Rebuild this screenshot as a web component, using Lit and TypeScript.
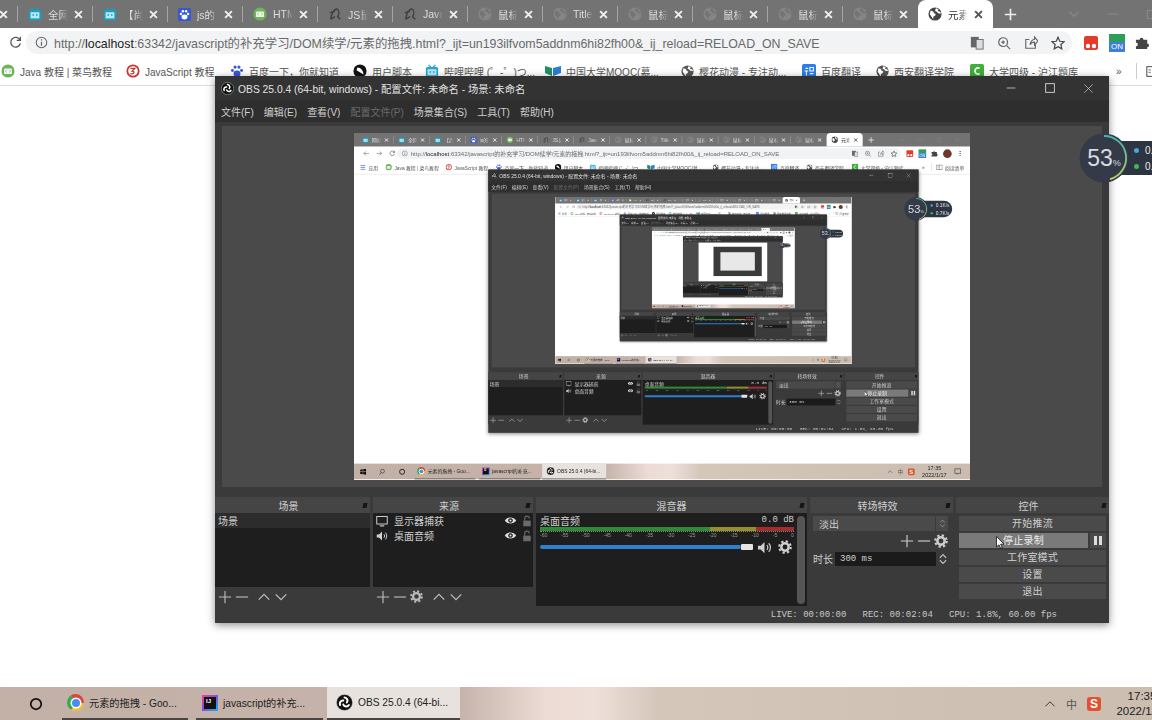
import { LitElement, css, html, svg } from 'lit'
import { customElement, property } from 'lit/decorators.js'

const sans = css`"Liberation Sans", "Noto Sans CJK SC", sans-serif`

// ---- icons ----
const ico = (size: number, body: unknown, box = 16) =>
  html`<svg width=${size} height=${size} viewBox="0 0 ${box} ${box}" style="flex:none;display:block">${body}</svg>`

const globe = (c: string, hole: string, size = 14) => ico(size, svg`
  <circle cx="8" cy="8" r="7.5" fill=${c}/>
  <path d="M3 4l3 1 1 2 2 1-1 2-2 1v3l-2-3-2-3zM9 1.5l3 1-1 2 3 1 1 2-3 0-2-2-2-1z" fill=${hole}/>`)

const obsLogo = (size: number) => ico(size, svg`
  <circle cx="8" cy="8" r="7.6" fill="#111" stroke="#ddd" stroke-width=".5"/>
  <g fill="none" stroke="#fff" stroke-width="1.9" stroke-linecap="round">
    <path d="M8 3.2a3 3 0 0 1 2.2 4.8"/>
    <path d="M8 3.2a3 3 0 0 1 2.2 4.8" transform="rotate(120 8 8)"/>
    <path d="M8 3.2a3 3 0 0 1 2.2 4.8" transform="rotate(240 8 8)"/>
  </g>`)

const paw = (size = 14) => ico(size, svg`
  <rect width="16" height="16" rx="2" fill="#3558d6"/>
  <g fill="#fff"><ellipse cx="8" cy="11" rx="3.6" ry="3"/><circle cx="3.6" cy="7.4" r="1.5"/><circle cx="12.4" cy="7.4" r="1.5"/><circle cx="6" cy="4" r="1.5"/><circle cx="10" cy="4" r="1.5"/></g>`)

const tv = (size = 14, c = '#1e9fc6') => ico(size, svg`
  <path d="M4 1l3 3M12 1L9 4" stroke=${c} stroke-width="1.4"/>
  <rect x="1" y="3.5" width="14" height="11.5" rx="2" fill=${c}/>
  <rect x="3" y="6" width="10" height="7" fill="#bfe6f2"/>
  <circle cx="6" cy="9" r="1" fill=${c}/><circle cx="10" cy="9" r="1" fill=${c}/>`)

const runoob = (size = 14) => ico(size, svg`
  <circle cx="8" cy="8" r="7.5" fill="#6fb35b"/>
  <rect x="3.5" y="5" width="9" height="6.5" rx="1" fill="#f1f6ee"/>
  <path d="M5 8l1.5-1.4M5 8l1.5 1.4M11 8L9.5 6.6M11 8L9.5 9.400" stroke="#6fb35b" stroke-width=".8"/>`)

const spider = (size = 14, c = '#3f3f3f') => ico(size, svg`
  <path d="M3 14C4 8 6 3 10 2c3 2 3 6 1 9l3 3M3 14l5-3M8 5c-2 0-5 1-6 2" fill="none" stroke=${c} stroke-width="1.6"/>`)

const gear = (size: number, c = '#cfcfcf') => ico(size, svg`
  <circle cx="8" cy="8" r="4.2" fill="none" stroke=${c} stroke-width="2.8"/>
  <circle cx="8" cy="8" r="6.6" fill="none" stroke=${c} stroke-width="2.4" stroke-dasharray="2.6 2.58"/>`)

const plus = (size = 14, c = '#bbb') => ico(size, svg`<path d="M8 1v14M1 8h14" stroke=${c} stroke-width="1.3"/>`)
const minus = (size = 14, c = '#bbb') => ico(size, svg`<path d="M1 8h14" stroke=${c} stroke-width="1.3"/>`)
const up = (size = 14, c = '#bbb') => ico(size, svg`<path d="M2 11l6-6 6 6" fill="none" stroke=${c} stroke-width="1.5"/>`)
const down = (size = 14, c = '#bbb') => ico(size, svg`<path d="M2 5l6 6 6-6" fill="none" stroke=${c} stroke-width="1.5"/>`)
const close = (size = 9, c = '#eee', w = 1.8) => ico(size, svg`<path d="M2 2l12 12M14 2L2 14" stroke=${c} stroke-width=${w * 2}/>`)
const speaker = (size: number, c = '#cfcfcf') => ico(size, svg`
  <path d="M1 6h3l4-4v12l-4-4H1z" fill=${c}/>
  <path d="M10.500 5.500a3.500 3.500 0 0 1 0 5M12.500 3.500a6.500 6.500 0 0 1 0 9" fill="none" stroke=${c} stroke-width="1.300"/>`)
const eye = () => ico(13, svg`
  <path d="M1 8c3-5 11-5 14 0-3 5-11 5-14 0z" fill="#dedede"/>
  <circle cx="8" cy="8" r="2.800" fill="#1e1e1e"/><circle cx="8" cy="8" r="1.300" fill="#dedede"/>`)
const lock = () => ico(12, svg`
  <rect x="3" y="7.500" width="10" height="7.500" fill="#6a6a6a"/>
  <path d="M5 7.500V4.500a3 3 0 0 1 6 0" fill="none" stroke="#6a6a6a" stroke-width="1.500"/>`)
const monitor = () => ico(12, svg`
  <rect x="1" y="2" width="14" height="10" fill="none" stroke="#d0d0d0" stroke-width="1.300"/>
  <path d="M5 14.500h6" stroke="#d0d0d0" stroke-width="1.500"/>`)

const tabIcons: Record<string, () => unknown> = {
  tv: () => tv(14, '#17a0c4'),
  paw: () => paw(13),
  run: () => runoob(14),
  spider: () => spider(14),
  globe: () => globe('#858585', '#747474'),
}

const tabs = [
  ['tv', '网站'], ['tv', '全网'], ['tv', '【尚'], ['paw', 'js的'], ['run', 'HTM'], ['spider', 'JS鼠'], ['spider', 'Java'],
  ['globe', '鼠标'], ['globe', 'Title'], ['globe', '鼠标'], ['globe', '鼠标'], ['globe', '鼠标'], ['globe', '鼠标'],
]

const marks = [
  { w: 125, t: 'Java 教程 | 菜鸟教程', i: () => runoob(14) },
  { w: 104, t: 'JavaScript 教程', i: () => ico(14, svg`<circle cx="8" cy="8" r="6.500" fill="none" stroke="#c7352c" stroke-width="2"/><path d="M5 5h5L7 8c3 0 3 4-2 3" fill="none" stroke="#c7352c" stroke-width="1.500"/>`) },
  { w: 123, t: '百度一下，你就知道', i: () => ico(14, svg`<g fill="#3558d6"><ellipse cx="8" cy="11" rx="4" ry="3.500"/><circle cx="2.800" cy="7.500" r="1.700"/><circle cx="13.200" cy="7.500" r="1.700"/><circle cx="5.800" cy="3.500" r="1.800"/><circle cx="10.200" cy="3.500" r="1.800"/></g>`) },
  { w: 72, t: '用户脚本', i: () => ico(14, svg`<circle cx="8" cy="8" r="7.500" fill="#111"/><path d="M5 4c4 0 7 4 7 8L4 7z" fill="#fff"/>`) },
  { w: 120, t: '哔哩哔哩 (゜-゜)つ...', i: () => tv(14, '#22a6d8') },
  { w: 136, t: '中国大学MOOC(慕...', i: () => ico(16, svg`<path d="M0 3l7 2v8l-7-3z" fill="#1f8f6a"/><path d="M8 5l8-2v7l-8 3z" fill="#2a7fd0"/>`) },
  { w: 121, t: '樱花动漫 - 专注动...', i: () => globe('#555', '#fff', 13) },
  { w: 74, t: '百度翻译', i: () => ico(14, svg`<rect width="16" height="16" rx="2" fill="#2b7de9"/><path d="M4 5h3M3 8h4M5 8v5M9 4h4v4H9zM9 11h4" stroke="#fff" stroke-width="1.200" fill="none"/>`) },
  { w: 94, t: '西安翻译学院', i: () => globe('#555', '#fff', 13) },
  { w: 146, t: '大学四级 - 沪江题库', i: () => ico(14, svg`<rect width="16" height="16" rx="2" fill="#3fae3a"/><path d="M11 5a3.500 3.500 0 1 0 0 6" fill="none" stroke="#fff" stroke-width="1.800"/>`) },
]

// ---- browser window ----
@customElement('chrome-window')
export class ChromeWindow extends LitElement {
  static styles = css`
    :host { display: flex; flex-direction: column; flex: 1; background: #fff; font-family: ${sans}; min-height: 0; }
    .strip { height: 28px; background: #737373; display: flex; padding-left: 7px; flex: none; }
    .tab { width: 75px; flex: none; display: flex; align-items: center; box-sizing: border-box; padding: 0 10px 0 10px; gap: 6px; color: #ddd; font-size: 10.500px; position: relative; }
    .tab::after { content: ""; position: absolute; right: 0; top: 6px; height: 16px; width: 1px; background: #a5a5a5; }
    .tab.last::after { display: none; }
    .tab .name { flex: 1; overflow: hidden; white-space: nowrap; -webkit-mask-image: linear-gradient(90deg, #000 60%, transparent); mask-image: linear-gradient(90deg, #000 60%, transparent); }
    .tab.active { background: #fff; border-radius: 8px 8px 0 0; color: #333; }
    .tab.active::after { display: none; }
    .new { margin-left: 11px; display: flex; align-items: center; }
    .winbtns { margin-left: auto; display: flex; align-items: center; padding-right: 21px; gap: 27px; }
    .tools { height: 29px; flex: none; display: flex; align-items: center; padding-left: 12px; }
    .nav { width: 27px; display: flex; justify-content: center; flex: none; }
    .pill { margin-left: -3px; width: 1046px; height: 23px; border-radius: 12px; background: #f1f3f4; display: flex; align-items: center; flex: none; box-sizing: border-box; padding: 0 7px 0 9px; }
    .url { margin-left: 6px; font-size: 12.400px; color: #6a6a6a; white-space: nowrap; }
    .url b { font-weight: 400; color: #222; }
    .pill-right { margin-left: auto; display: flex; gap: 13px; align-items: center; }
    .exts { display: flex; align-items: center; margin-left: 11px; gap: 10px; }
    .on { width: 16px; height: 18px; display: flex; flex-direction: column; font-size: 8px; line-height: 9px; text-align: center; color: #fff; }
    .on i { height: 8px; background: #2f9e58; display: block; }
    .on span { background: #3d7fd9; height: 10px; }
    .avatar { width: 18px; height: 18px; border-radius: 50%; background: #6b3a2a; }
    .dots { width: 3px; height: 13px; margin-left: 6px; background: radial-gradient(circle, #555 1.300px, transparent 1.500px) 0 0/3px 4.500px; }
    .marks { height: 28px; flex: none; display: flex; align-items: center; padding-left: 12px; border-bottom: 1px solid #dcdcdc; font-size: 10px; color: #555; white-space: nowrap; }
    .mark { display: flex; align-items: center; gap: 5px; flex: none; overflow: hidden; }
    .apps { width: 53px; }
    .more { margin-left: 0; width: 20px; flex: none; color: #555; }
    .vsep { width: 1px; height: 16px; background: #ccc; flex: none; }
    .read { margin-left: 9px; display: flex; align-items: center; gap: 5px; }
  `

  render() {
    return html`
      <div class="strip">
        ${tabs.map(([k, t], n) => html`
          <div class="tab ${n === tabs.length - 1 ? 'last' : ''}">${tabIcons[k]()}<span class="name">${t}</span>${close(9)}</div>`)}
        <div class="tab active">${globe('#444', '#fff')}<span class="name">元素</span>${close(9, '#555')}</div>
        <div class="new">${ico(13, svg`<path d="M8 1v14M1 8h14" stroke="#eee" stroke-width="2"/>`)}</div>
        <div class="winbtns">
          ${down(12, '#8a8a8a')}${minus(12, '#8a8a8a')}
          ${ico(11, svg`<rect x="2" y="2" width="12" height="12" fill="none" stroke="#8a8a8a" stroke-width="1.500"/>`)}
          ${close(11, '#8a8a8a', .6)}
        </div>
      </div>
      <div class="tools">
        <div class="nav">${ico(13, svg`<path d="M15 8H2M7 3L2 8l5 5" fill="none" stroke="#777" stroke-width="1.600"/>`)}</div>
        <div class="nav">${ico(13, svg`<path d="M1 8h13M9 3l5 5-5 5" fill="none" stroke="#777" stroke-width="1.600"/>`)}</div>
        <div class="nav">${ico(13, svg`<path d="M13.500 5A6 6 0 1 0 14 9M14 1v4.500H9.500" fill="none" stroke="#555" stroke-width="1.600"/>`)}</div>
        <div class="pill">
          ${ico(13, svg`<circle cx="8" cy="8" r="6.500" fill="none" stroke="#666" stroke-width="1.300"/><path d="M8 7v5M8 4v1.500" stroke="#666" stroke-width="1.500"/>`)}
          <span class="url">http://<b>localhost</b>:63342/javascript的补充学习/DOM续学/元素的拖拽.html?_ijt=un193ilfvom5addnm6hi82fh00&_ij_reload=RELOAD_ON_SAVE</span>
          <div class="pill-right">
            ${ico(14, svg`<rect x="1" y="1" width="9" height="12" fill="#666"/><rect x="7" y="4" width="8" height="11" fill="#ddd" stroke="#666"/>`)}
            ${ico(14, svg`<circle cx="7" cy="7" r="5" fill="none" stroke="#666" stroke-width="1.400"/><path d="M11 11l4 4M5 7h4M7 5v4" stroke="#666" stroke-width="1.400"/>`)}
            ${ico(14, svg`<path d="M13 9v5H2V4h4M7 10c0-4 3-6 5-6V1l4 5-4 4V7c-2 0-4 1-5 3z" fill="none" stroke="#666" stroke-width="1.300"/>`)}
            ${ico(14, svg`<path d="M8 1.500l2 4.500 5 .5-3.700 3.300 1 4.900L8 12.300 3.700 14.700l1-4.900L1 6.500 6 6z" fill="none" stroke="#444" stroke-width="1.400"/>`)}
          </div>
        </div>
        <div class="exts">
          ${ico(16, svg`<rect x="1" y="1" width="14" height="14" rx="2" fill="#e33a2c"/><circle cx="5" cy="11" r="2.200" fill="#fff"/><circle cx="11" cy="11" r="2.200" fill="#fff"/>`)}
          <div class="on"><i></i><span>ON</span></div>
          ${ico(15, svg`<path d="M1 5h4a2 2 0 1 1 4 0h4v4a2 2 0 1 1 0 4v2H1v-3a2 2 0 1 0 0-4z" fill="#444"/>`)}
          <div class="avatar"></div>
          <div class="dots"></div>
        </div>
      </div>
      <div class="marks">
        <div class="mark apps">${ico(13, svg`<path d="M2 3h12M2 8h12M2 13h12" stroke="#4a7fd0" stroke-width="2"/>`)}应用</div>
        ${marks.map(m => html`<div class="mark" style="width:${m.w}px">${m.i()}<span>${m.t}</span></div>`)}
        <div class="more">»</div>
        <div class="vsep"></div>
        <div class="read">${ico(13, svg`<rect x="1" y="2" width="14" height="12" fill="none" stroke="#555" stroke-width="1.300"/><path d="M8 2v12M3 6h3M3 9h3" stroke="#555"/>`)}阅读清单</div>
      </div>
    `
  }
}

// ---- taskbar ----
@customElement('task-bar')
export class TaskBar extends LitElement {
  static styles = css`
    :host { display: flex; flex: none; height: 33px; align-items: center; font-family: ${sans}; font-size: 10.200px; color: #222;
      background: linear-gradient(90deg, #c2b0a6 0, #c6b4ab 524px, #ecdcd5 610px, #efdfd9 660px, #d4c7ba 720px, #cabdb0 1280px); }
    .sys { flex: none; display: flex; justify-content: center; }
    .btn { height: 33px; box-sizing: border-box; border-bottom: 2px solid #4a4541; display: flex; align-items: center; gap: 5px; padding-left: 6px; flex: none; white-space: nowrap; overflow: hidden; }
    .btn.cur { background: #e8e2de; }
    .chrome { width: 17px; height: 17px; border-radius: 50%; flex: none; position: relative;
      background: conic-gradient(from -30deg, #de4437 0 120deg, #f6c02c 120deg 240deg, #3aa757 240deg 360deg); }
    .chrome::after { content: ""; position: absolute; inset: 4.500px; border-radius: 50%; background: #4a8cf0; box-shadow: 0 0 0 1.500px #fff; }
    .ij { width: 16px; height: 16px; flex: none; background: linear-gradient(135deg, #fc3a8b, #7b53e0 50%, #12b7f0); padding: 2px; box-sizing: border-box; }
    .ij div { width: 12px; height: 12px; background: #111; color: #fff; font-size: 6px; line-height: 8px; text-indent: 2px; font-weight: 700; }
    .right { margin-left: auto; display: flex; align-items: center; }
    .clock { width: 70px; flex: none; text-align: center; line-height: 15px; font-size: 11.500px; }
    .cn { font-size: 11px; color: #555; }
    .sogou { width: 14px; height: 14px; border-radius: 3px; background: #e2502d; color: #fff; font-size: 12px; font-weight: 700; line-height: 14px; text-align: center; }
  `

  render() {
    return html`
      <div class="sys" style="width:38px">${ico(14, svg`<path d="M1 3l6-1v5.500H1zM8 2l7-1v6.500H8zM1 8.500h6V14l-6-1zM8 8.500h7V15l-7-1z" fill="#111"/>`)}</div>
      <div class="sys" style="width:40px">${ico(14, svg`<circle cx="9.500" cy="6.500" r="4.500" fill="none" stroke="#222" stroke-width="1.300"/><path d="M6.500 10L2 15" stroke="#222" stroke-width="1.300"/>`)}</div>
      <div class="sys" style="width:44px">${ico(14, svg`<circle cx="8" cy="8" r="6" fill="none" stroke="#111" stroke-width="2"/>`)}</div>
      <div class="btn" style="width:126px;margin-left:4px;padding-left:5px"><div class="chrome"></div>元素的拖拽 - Goo...</div>
      <div class="btn" style="width:127px;margin-left:8px;padding-left:6px"><div class="ij"><div>IJ</div></div>javascript的补充...</div>
      <div class="btn cur" style="width:133px;margin-left:4px;padding-left:9px">${obsLogo(17)}OBS 25.0.4 (64-bi...</div>
      <div class="right">
        ${ico(12, svg`<path d="M2 11l6-6 6 6" fill="none" stroke="#333" stroke-width="1.300"/>`)}
        <span class="cn" style="margin-left:10px">中</span>
        <div class="sogou" style="margin-left:10px">S</div>
        <div class="clock" style="margin-left:6px"><div>17:35</div><div>2022/1/17</div></div>
        <div style="margin:0 18px 0 6px">${ico(15, svg`<path d="M1.500 2h13v10H9l-2 2v-2H1.500z" fill="none" stroke="#222" stroke-width="1.200"/>`)}</div>
      </div>
    `
  }
}

// ---- OBS ----
const meterLabels = ['-60', '-55', '-50', '-45', '-40', '-35', '-30', '-25', '-20', '-15', '-10', '-5', '0']

@customElement('obs-window')
export class ObsWindow extends LitElement {
  @property({ type: Number }) depth = 0

  static styles = css`
    :host { display: flex; flex-direction: column; position: absolute; left: 279px; top: 76px; width: 894px; height: 547px;
      background: #3a3a3a; color: #cfcfcf; font-family: ${sans}; font-size: 10px; box-shadow: 0 2px 8px rgba(0,0,0,.45); }
    .title { height: 24px; flex: none; background: #333; display: flex; align-items: center; padding-left: 6px; gap: 4px; font-size: 10.300px; color: #e2e2e2; white-space: nowrap; }
    .ctl { margin-left: auto; display: flex; align-items: center; }
    .ctl div { width: 39px; display: flex; justify-content: center; }
    .menu { height: 22px; flex: none; background: #2e2e2e; display: flex; align-items: center; padding-left: 6px; gap: 10px; white-space: nowrap; font-size: 10px; }
    .menu .off { color: #6b6b6b; }
    .preview { margin: 4px 7px 10px; height: 361px; flex: none; background: #4a4a4a; display: flex; align-items: center; justify-content: center; }
    .frame { width: 616px; height: 346.500px; overflow: hidden; flex: none; background: #fff; filter: blur(.35px); }
    .frame desk-screen { transform: scale(.48125); transform-origin: 0 0; }
    .stub { margin: 5.900% 8% 0 21.800%; height: 76%; background: #3a3a3a; padding: 8% 10%; box-sizing: border-box; }
    .stub div { height: 100%; background: #e8e8e8; }
    .docks { display: flex; gap: 3px; height: 109px; flex: none; }
    .dock { display: flex; flex-direction: column; flex: none; }
    .head { height: 16px; flex: none; box-sizing: border-box; padding-right: 8px; background: #454545; display: flex; align-items: center; justify-content: center; position: relative; }
    .head.mid { padding-right: 0; }
    .head::after { content: ""; position: absolute; right: 3px; top: 6px; width: 4px; height: 5px; background: #151515; transform: skewX(-12deg); }
    .list { flex: 1; background: #1e1e1e; min-height: 0; }
    .bar { height: 19px; flex: none; display: flex; align-items: center; padding-left: 3px; gap: 3px; background: #3a3a3a; }
    .row { height: 15px; display: flex; align-items: center; padding-left: 3px; }
    .row.sel { background: #2c2c2c; }
    .src { gap: 6px; padding: 0 0 0 3px; height: 15px; display: flex; align-items: center; }
    .src .end { margin-left: auto; display: flex; align-items: center; gap: 4px; }
    .mix { flex: 1; background: #1e1e1e; display: flex; min-height: 0; }
    .mixbody { flex: 1; padding: 1px 3px 0 4px; min-width: 0; }
    .mixtop { display: flex; justify-content: space-between; height: 12px; align-items: center; }
    .db { font-family: "Liberation Mono", monospace; font-size: 9px; }
    .meter { display: flex; height: 4px; margin: 1px 0 0 0; }
    .meter i { display: block; height: 100%; }
    .ticks { display: flex; justify-content: space-between; font-size: 5px; line-height: 6px; color: #999; border-top: 1px dotted #888; }
    .vol { display: flex; align-items: center; margin-top: 1px; height: 16px; }
    .track { flex: 1; height: 4px; background: #2f7fd0; border-radius: 2px; }
    .knob { width: 12px; height: 6px; background: #e4e4e4; border-radius: 1px; flex: none; }
    .scroll { width: 8px; flex: none; margin: 3px 2px 2px 0; background: #555; border-radius: 4px; }
    .pane { flex: 1; padding: 3px 5px 0 3px; display: flex; flex-direction: column; min-height: 0; }
    .combo { height: 15px; display: flex; background: #4a4a4a; flex: none; align-items: center; }
    .combo span { flex: 1; padding-left: 6px; }
    .combo i { width: 12px; height: 15px; border-left: 1px solid #3a3a3a; font-style: normal; display: flex; justify-content: center; align-items: center; }
    .acts { height: 20px; display: flex; justify-content: flex-end; align-items: center; gap: 3px; flex: none; }
    .time { display: flex; align-items: center; gap: 2px; flex: none; height: 15px; }
    .spin { flex: 1; background: #1b1b1b; height: 14px; display: flex; align-items: center; padding-left: 5px; font-family: "Liberation Mono", monospace; font-size: 9px; }
    .btn { height: 15px; flex: none; background: #4a4a4a; text-align: center; line-height: 15px; margin-bottom: 2px; letter-spacing: .2px; }
    .btn.on { background: #7a7a7a; color: #eee; flex: 1; margin-bottom: 0; }
    .recrow { display: flex; gap: 2px; margin-bottom: 2px; flex: none; }
    .pause { width: 16px; height: 15px; background: #4a4a4a; display: flex; justify-content: center; align-items: center; gap: 2px; flex: none; }
    .pause i { width: 3px; height: 9px; background: #ddd; }
    .btns { padding: 3px 3px 0; display: flex; flex-direction: column; flex: 1; background: #3a3a3a; }
    .status { flex: 1; display: flex; align-items: center; justify-content: flex-end; padding-right: 52px; font-family: "Liberation Mono", monospace; font-size: 9px; color: #c8c8c8; white-space: pre; }
  `

  render() {
    return html`
      <div class="title">
        ${obsLogo(13)}<span>OBS 25.0.4 (64-bit, windows) - 配置文件: 未命名 - 场景: 未命名</span>
        <div class="ctl">
          <div>${minus(10, '#cfcfcf')}</div>
          <div>${ico(10, svg`<rect x="1" y="1" width="14" height="14" fill="none" stroke="#cfcfcf" stroke-width="1.500"/>`)}</div>
          <div style="margin-right:1px">${close(11, '#cfcfcf', .5)}</div>
        </div>
      </div>
      <div class="menu">
        <span>文件(F)</span><span>编辑(E)</span><span>查看(V)</span><span class="off">配置文件(P)</span><span>场景集合(S)</span><span>工具(T)</span><span>帮助(H)</span>
      </div>
      <div class="preview">
        <div class="frame">
          ${this.depth < 3
            ? html`<desk-screen .depth=${this.depth + 1}></desk-screen>`
            : html`<div class="stub"><div></div></div>`}
        </div>
      </div>
      <div class="docks">
        <div class="dock" style="width:155px">
          <div class="head">场景</div>
          <div class="list"><div class="row sel">场景</div></div>
          <div class="bar">${plus()}${minus()}<span style="width:2px"></span>${up()}${down()}</div>
        </div>
        <div class="dock" style="width:160px">
          <div class="head">来源</div>
          <div class="list">
            <div class="src">${monitor()}<span>显示器捕获</span><div class="end">${eye()}${lock()}</div></div>
            <div class="src">${speaker(12, '#d0d0d0')}<span>桌面音频</span><div class="end">${eye()}${lock()}</div></div>
          </div>
          <div class="bar">${plus()}${minus()}${gear(13, '#bbb')}<span style="width:3px"></span>${up()}${down()}</div>
        </div>
        <div class="dock" style="width:271px">
          <div class="head mid">混音器</div>
          <div class="mix">
            <div class="mixbody">
              <div class="mixtop"><span>桌面音频</span><span class="db">0.0 dB</span></div>
              <div class="meter">
                <i style="width:67%;background:#2f8a34"></i><i style="width:18%;background:#94902e"></i><i style="width:15%;background:#a52c2c"></i>
              </div>
              <div class="ticks">${meterLabels.map(l => html`<span>${l}</span>`)}</div>
              <div class="vol">
                <div class="track"></div><div class="knob"></div>
                <div style="margin-left:4px">${speaker(15)}</div>
                <div style="margin:0 2px 0 6px">${gear(14)}</div>
              </div>
            </div>
            <div class="scroll"></div>
          </div>
        </div>
        <div class="dock" style="width:143px">
          <div class="head">转场特效</div>
          <div class="pane">
            <div class="combo"><span>淡出</span><i>${ico(9, svg`<path d="M4 6l4-4 4 4M4 10l4 4 4-4" fill="none" stroke="#999" stroke-width="1.500"/>`)}</i></div>
            <div class="acts">${plus(14, '#ccc')}${minus(14, '#ccc')}${gear(14)}</div>
            <div class="time"><span>时长</span><div class="spin">300 ms</div>${ico(10, svg`<path d="M3 6l5-5 5 5M3 10l5 5 5-5" fill="none" stroke="#bbb" stroke-width="2"/>`)}</div>
          </div>
        </div>
        <div class="dock" style="width:153px">
          <div class="head">控件</div>
          <div class="btns">
            <div class="btn">开始推流</div>
            <div class="recrow"><div class="btn on">停止录制</div><div class="pause"><i></i><i></i></div></div>
            <div class="btn">工作室模式</div>
            <div class="btn">设置</div>
            <div class="btn">退出</div>
          </div>
        </div>
      </div>
      <div class="status">LIVE: 00:00:00   REC: 00:02:04   CPU: 1.8%, 60.00 fps</div>
    `
  }
}

// ---- whole screen, which holds a smaller copy of itself through the OBS preview ----
@customElement('desk-screen')
export class DeskScreen extends LitElement {
  @property({ type: Number }) depth = 0

  static styles = css`
    :host { display: block; width: 1280px; height: 720px; position: relative; overflow: hidden; background: #fff; }
    .col { display: flex; flex-direction: column; height: 720px; }
    .meter { position: absolute; left: 1143px; top: 133px; width: 100px; height: 50px; font-family: "Liberation Sans", sans-serif; }
    .pill { position: absolute; left: 20px; top: 8px; right: 0; height: 34px; border-radius: 17px; background: #2d3442; color: #e8e8e8; font-size: 10px; }
    .stat { position: absolute; left: 35px; display: flex; align-items: center; gap: 6px; height: 12px; }
    .stat i { width: 5px; height: 5px; border-radius: 50%; }
    .dial { position: absolute; left: 0; top: 0; width: 50px; height: 50px; }
    .num { position: absolute; left: 0; top: 0; width: 50px; height: 50px; display: flex; align-items: baseline; justify-content: center; line-height: 50px; color: #d8dbe0; font-size: 23px; font-weight: 300; }
    .num small { font-size: 9px; }
    .cursor { position: absolute; left: 1060px; top: 536px; }
  `

  render() {
    return html`
      <div class="col">
        <chrome-window></chrome-window>
        <task-bar></task-bar>
      </div>
      <obs-window .depth=${this.depth}></obs-window>
      <div class="meter">
        <div class="pill">
          <div class="stat" style="top:3px"><i style="background:#4aa3df"></i>0.1K/s</div>
          <div class="stat" style="top:19px"><i style="background:#3fb950"></i>0.7K/s</div>
        </div>
        <svg class="dial" viewBox="0 0 50 50">
          <defs><linearGradient id="arc" x1="0" y1="0" x2="0" y2="1"><stop offset="0" stop-color="#45b5ad"/><stop offset="1" stop-color="#b9cf6a"/></linearGradient></defs>
          <circle cx="25" cy="25" r="24.500" fill="#343a48"/>
          <path d="M25 3a22 22 0 0 1 6 43.200" fill="none" stroke="url(#arc)" stroke-width="1.800"/>
        </svg>
        <div class="num">53<small>%</small></div>
      </div>
      <svg class="cursor" width="9" height="13" viewBox="0 0 9 13"><path d="M.5.500v10.500l2.500-2.200 1.700 3.500 1.600-.8L4.600 8.200H8z" fill="#fff" stroke="#111" stroke-width=".8"/></svg>
    `
  }
}

@customElement('app-root')
export class AppRoot extends LitElement {
  static styles = css`
    :host { display: block; width: 1152px; height: 720px; overflow: hidden; }
    desk-screen { margin-left: -64px; }
  `

  render() {
    return html`<desk-screen></desk-screen>`
  }
}
